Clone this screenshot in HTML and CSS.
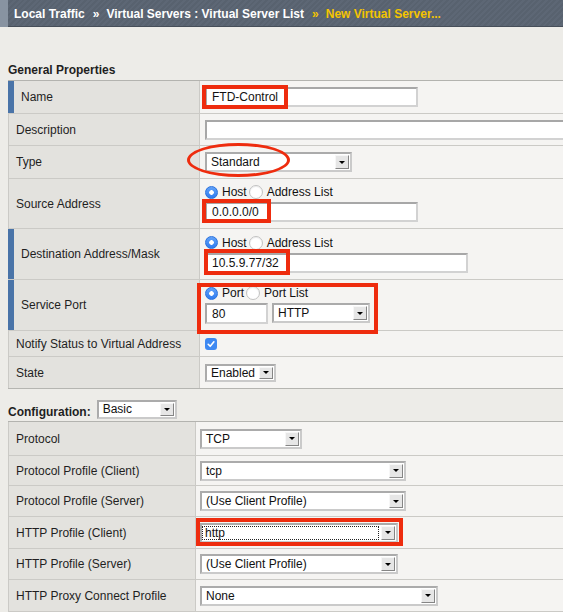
FILE: index.html
```html
<!DOCTYPE html>
<html lang="en">
<head>
<meta charset="utf-8">
<title>New Virtual Server</title>
<link rel="stylesheet" href="styles.css">
</head>
<body>
<div class="topbar">
  <div class="strip"></div>
  <div class="crumb">
    <span>Local Traffic</span><span class="sep">»</span><span>Virtual Servers : Virtual Server List</span><span class="sep hl">»</span><span class="hl">New Virtual Server...</span>
  </div>
</div>

<div class="page">
  <div class="section">General Properties</div>
  <div class="grid g1">
    <div class="row req h32">
      <div class="lab">Name</div>
      <div class="val">
        <input class="inp w-name" value="FTD-Control">
        <span class="box b-name"></span>
      </div>
    </div>
    <div class="row h31">
      <div class="lab">Description</div>
      <div class="val"><input class="inp w-desc" value=""></div>
    </div>
    <div class="row h32">
      <div class="lab">Type</div>
      <div class="val">
        <span class="sel w-type"><span class="st">Standard</span><span class="btn"></span></span>
        <span class="ellipse"></span>
      </div>
    </div>
    <div class="row h49">
      <div class="lab">Source Address</div>
      <div class="val">
        <div class="opts"><span class="radio on"></span><span class="ot">Host</span><span class="radio off"></span><span class="ot">Address List</span></div>
        <input class="inp w-src" value="0.0.0.0/0">
        <span class="box b-src"></span>
      </div>
    </div>
    <div class="row req h50">
      <div class="lab">Destination Address/Mask</div>
      <div class="val">
        <div class="opts"><span class="radio on"></span><span class="ot">Host</span><span class="radio off"></span><span class="ot">Address List</span></div>
        <input class="inp w-dst" value="10.5.9.77/32">
        <span class="box b-dst"></span>
      </div>
    </div>
    <div class="row req h50">
      <div class="lab">Service Port</div>
      <div class="val">
        <div class="opts"><span class="radio on"></span><span class="ot">Port</span><span class="radio off"></span><span class="ot">Port List</span></div>
        <div class="pair">
          <input class="inp tall w-port" value="80">
          <span class="sel tall w-svc"><span class="st">HTTP</span><span class="btn"></span></span>
        </div>
        <span class="box b-svc"></span>
      </div>
    </div>
    <div class="row h25">
      <div class="lab">Notify Status to Virtual Address</div>
      <div class="val">
        <svg class="chk" width="12" height="12" viewBox="0 0 12 12"><rect width="12" height="12" rx="3" fill="#3e89f2"/><path d="M3.2 6.3 L5.2 8.3 L8.9 3.8" stroke="#fff" stroke-width="1.6" fill="none" stroke-linecap="round" stroke-linejoin="round"/></svg>
      </div>
    </div>
    <div class="row h31 last">
      <div class="lab">State</div>
      <div class="val">
        <span class="sel short w-state"><span class="st">Enabled</span><span class="btn"></span></span>
      </div>
    </div>
  </div>

  <div class="cfg">
    <span class="cfg-label">Configuration:</span>
    <span class="sel w-basic"><span class="st">Basic</span><span class="btn"></span></span>
  </div>

  <div class="grid g2">
    <div class="row h33">
      <div class="lab">Protocol</div>
      <div class="val"><span class="sel w-tcp"><span class="st">TCP</span><span class="btn"></span></span></div>
    </div>
    <div class="row h29">
      <div class="lab">Protocol Profile (Client)</div>
      <div class="val"><span class="sel w-prof"><span class="st">tcp</span><span class="btn"></span></span></div>
    </div>
    <div class="row h30">
      <div class="lab">Protocol Profile (Server)</div>
      <div class="val"><span class="sel w-prof"><span class="st">(Use Client Profile)</span><span class="btn"></span></span></div>
    </div>
    <div class="row h31">
      <div class="lab">HTTP Profile (Client)</div>
      <div class="val">
        <span class="sel w-http"><span class="st focus">http</span><span class="btn"></span></span>
        <span class="box b-http"></span>
      </div>
    </div>
    <div class="row h30">
      <div class="lab">HTTP Profile (Server)</div>
      <div class="val"><span class="sel w-http"><span class="st">(Use Client Profile)</span><span class="btn"></span></span></div>
    </div>
    <div class="row h31">
      <div class="lab">HTTP Proxy Connect Profile</div>
      <div class="val"><span class="sel w-none"><span class="st">None</span><span class="btn"></span></span></div>
    </div>
  </div>
</div>
</body>
</html>
```

FILE: styles.css
```css
html, body {
  margin: 0;
  padding: 0;
}

body {
  width: 563px;
  height: 612px;
  overflow: hidden;
  background: #edece8;
  font-family: "Liberation Sans", Arial, sans-serif;
  font-size: 12px;
  color: #1f1f1f;
}

/* ---------- breadcrumb bar ---------- */
.topbar {
  display: flex;
  height: 27px;
}

.strip {
  width: 8px;
  flex: none;
  background: #8893a1;
}

.crumb {
  flex: 1;
  display: flex;
  align-items: center;
  box-sizing: border-box;
  padding: 1px 0 0 6px;
  background: repeating-linear-gradient(135deg, #5d6775 0 2px, #58626f 2px 4px);
  border-bottom: 1px solid #464e59;
  color: #fff;
  font-weight: bold;
  white-space: nowrap;
}

.sep {
  margin: 0 7px 0 8px;
}

.hl {
  color: #f4c400;
}

/* ---------- page ---------- */
.page {
  width: 555px;
  padding-left: 8px;
  overflow: hidden;
}

.section {
  margin: 36px 0 3px;
  height: 14px;
  line-height: 14px;
  font-weight: bold;
}

.grid {
  width: 640px;
  border-top: 1px solid #b3b3af;
}

.row {
  display: flex;
  border-bottom: 1px solid #cbcac6;
}

.row.last {
  border-bottom-color: #b5b5b1;
}

.h25 { height: 25px; }
.h29 { height: 29px; }
.h30 { height: 30px; }
.h31 { height: 31px; }
.h32 { height: 32px; }
.h33 { height: 33px; }
.h49 { height: 49px; }
.h50 { height: 50px; }

.lab {
  box-sizing: border-box;
  width: 192px;
  flex: none;
  display: flex;
  align-items: center;
  padding-left: 7px;
  background: #e3e2de;
  border-left: 1px solid #cbcac6;
  border-right: 1px solid #cbcac6;
  white-space: nowrap;
}

.req .lab {
  border-left: 6px solid #4a74a8;
}

.val {
  flex: 1;
  position: relative;
  display: flex;
  flex-direction: column;
  justify-content: center;
  align-items: flex-start;
  padding-left: 5px;
  background: #f5f4f2;
}

.g2 .lab {
  width: 188px;
}

.g2 .val {
  padding-left: 4px;
}

/* ---------- controls ---------- */
.inp {
  box-sizing: border-box;
  height: 20px;
  margin: 0;
  padding: 0 0 0 5px;
  border: 2px solid #d2d2d2;
  border-top-color: #a7a7a7;
  border-left-color: #a7a7a7;
  background: #fff;
  font: inherit;
  color: #111;
  outline: none;
}

.tall {
  height: 21px;
}

.w-name { width: 213px; }
.w-desc { width: 420px; }
.w-src { width: 213px; }
.w-dst { width: 263px; }
.w-port { width: 63px; }

.sel {
  box-sizing: border-box;
  display: flex;
  height: 20px;
  border: 2px solid #cacaca;
  border-top-color: #ababab;
  border-left-color: #ababab;
  background: #fff;
  color: #111;
}

.sel.short {
  height: 18px;
}

.st {
  flex: 1;
  min-width: 0;
  padding-left: 4px;
  display: flex;
  align-items: center;
  white-space: nowrap;
  overflow: hidden;
}

.st.focus {
  margin: 1px 1px 1px 0;
  padding-left: 3px;
  outline: 1px dotted #222;
  outline-offset: -1px;
}

.btn {
  box-sizing: border-box;
  width: 14px;
  flex: none;
  margin: 1px;
  display: flex;
  align-items: center;
  justify-content: center;
  border: 1px solid;
  border-color: #f7f7f7 #858585 #858585 #f7f7f7;
  background: #e6e6e6;
}

.btn::after {
  content: "";
  border-style: solid;
  border-width: 3px 3px 0;
  border-color: #000 transparent transparent;
}

.w-type { width: 147px; }
.w-svc { width: 98px; }
.w-state { width: 71px; }
.w-basic { width: 80px; }
.w-tcp { width: 102px; }
.w-prof { width: 206px; }
.w-http { width: 198px; }
.w-none { width: 238px; }

.pair {
  display: flex;
  gap: 4px;
}

.opts {
  display: flex;
  align-items: center;
  height: 14px;
  margin-bottom: 3px;
}

.radio {
  box-sizing: border-box;
  width: 13px;
  height: 13px;
  flex: none;
  border-radius: 50%;
}

.radio.on {
  background:
    radial-gradient(circle, #fff 0 2px, rgba(255,255,255,0) 2.6px),
    linear-gradient(#62a2f8, #2f7cf0);
  border: 1px solid #2b72dc;
}

.radio.off {
  margin-left: 2px;
  width: 14px;
  height: 14px;
  background: #fff;
  border: 1px solid #c2c2c2;
  box-shadow: inset 0 1px 1px rgba(0,0,0,0.08);
}

.ot {
  margin-left: 4px;
  color: #111;
}

.chk {
  display: block;
}

/* ---------- configuration line ---------- */
.cfg {
  display: flex;
  align-items: center;
  gap: 6px;
  height: 20px;
  margin: 10px 0 2px;
}

.cfg-label {
  font-weight: bold;
  padding-top: 6px;
}

.cfg .sel {
  height: 19px;
}

/* ---------- red annotations ---------- */
.box, .ellipse {
  position: absolute;
  z-index: 2;
  box-sizing: border-box;
  pointer-events: none;
}

.box {
  border: 4px solid #ee2c0e;
}

.ellipse {
  left: -13px;
  top: -3px;
  width: 103px;
  height: 34px;
  border: 3px solid #ee2c0e;
  border-radius: 50%;
}

.b-name { left: 2px; top: 4px; width: 86px; height: 24px; }
.b-src { left: 2px; top: 20px; width: 69px; height: 24px; }
.b-dst { left: 4px; top: 20px; width: 86px; height: 26px; }
.b-svc { left: -3px; top: 3px; width: 181px; height: 51px; }
.b-http { left: 0; top: 1px; width: 207px; height: 28px; }
```
